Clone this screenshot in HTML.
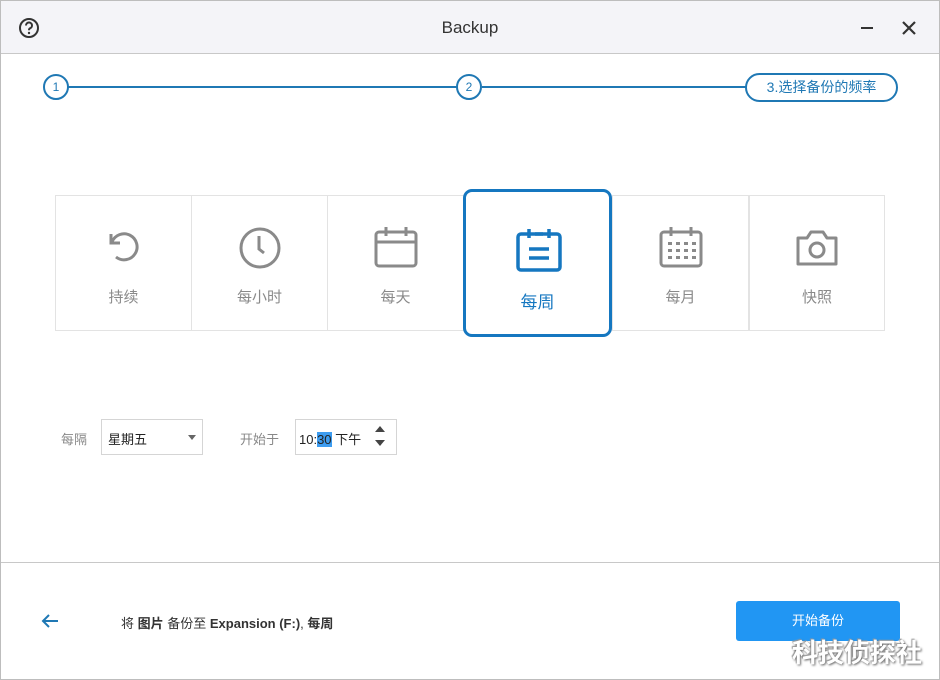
<!DOCTYPE html><html><head><meta charset="utf-8"><style>
*{margin:0;padding:0;box-sizing:border-box}
body{width:940px;height:680px;background:#fff;font-family:"Liberation Sans","Noto Sans CJK SC",sans-serif;position:relative;overflow:hidden}
.a{position:absolute}
.win{left:0;top:0;width:940px;height:680px;border:1px solid #bdbdbd}
.title{left:1px;top:1px;width:938px;height:53px;background:#f4f4f8;border-bottom:1px solid #c8c8c8}
.tile{top:195px;height:136px;width:137px;border:1px solid #e3e3e3;text-align:center;color:#8a8a8a;font-size:15px}
.tile svg{position:absolute;left:50%;top:28px;margin-left:-24px}
.tile span{position:absolute;left:0;right:0;top:90px}
.circ{width:26px;height:26px;border:2px solid #1f78b4;border-radius:50%;color:#1f78b4;font-size:12px;text-align:center;line-height:22px;background:#fff}
.line{height:2px;background:#1f78b4;top:86px}
</style></head><body>
<div class="a win"></div>
<div class="a title"></div>
<svg class="a" style="left:18px;top:17px" width="22" height="22" viewBox="0 0 22 22"><circle cx="11" cy="11" r="9" fill="none" stroke="#333" stroke-width="2"/><path d="M8 8.5a3 3 0 1 1 4 2.8c-.8.4-1 1-1 2" fill="none" stroke="#333" stroke-width="2"/><circle cx="11" cy="16" r="1.2" fill="#333"/></svg>
<div class="a" style="left:0;width:940px;top:18px;text-align:center;font-size:17px;color:#333">Backup</div>
<div class="a" style="left:861px;top:27px;width:12px;height:2px;background:#333"></div>
<svg class="a" style="left:901px;top:20px" width="16" height="16"><path d="M2 2L14 14M14 2L2 14" stroke="#333" stroke-width="2.2"/></svg>
<div class="a line" style="left:68px;width:390px"></div>
<div class="a line" style="left:482px;width:265px"></div>
<div class="a circ" style="left:43px;top:74px">1</div>
<div class="a circ" style="left:456px;top:74px">2</div>
<div class="a" style="left:745px;top:73px;width:153px;height:29px;border:2px solid #1f78b4;border-radius:15px;color:#1f78b4;font-size:14px;text-align:center;line-height:25px;background:#fff">3.选择备份的频率</div>

<div class="a tile" style="left:55px"><svg width="48" height="48" viewBox="0 0 48 48"><path d="M11 10v9h9" fill="none" stroke="#8a8a8a" stroke-width="3"/><path d="M12 18A13 13 0 1 1 16 33" fill="none" stroke="#8a8a8a" stroke-width="3"/></svg><span>持续</span></div>
<div class="a tile" style="left:191px"><svg width="48" height="48" viewBox="0 0 48 48"><circle cx="24" cy="24" r="19" fill="none" stroke="#8a8a8a" stroke-width="3"/><path d="M23 12v13l5 4" fill="none" stroke="#8a8a8a" stroke-width="3"/></svg><span>每小时</span></div>
<div class="a tile" style="left:327px"><svg width="48" height="48" viewBox="0 0 48 48"><rect x="4" y="8" width="40" height="34" rx="3" fill="none" stroke="#8a8a8a" stroke-width="3"/><path d="M4 18h40" stroke="#8a8a8a" stroke-width="3"/><path d="M14 3v9M34 3v9M20 8h8" stroke="#8a8a8a" stroke-width="3"/></svg><span>每天</span></div>
<div class="a tile" style="left:612px"><svg width="48" height="48" viewBox="0 0 48 48"><rect x="4" y="8" width="40" height="34" rx="3" fill="none" stroke="#8a8a8a" stroke-width="3"/><path d="M14 3v9M34 3v9M20 8h8" stroke="#8a8a8a" stroke-width="3"/><g fill="#8a8a8a"><rect x="11" y="18" width="4" height="3"/><rect x="19" y="18" width="4" height="3"/><rect x="27" y="18" width="4" height="3"/><rect x="35" y="18" width="4" height="3"/><rect x="11" y="25" width="4" height="3"/><rect x="19" y="25" width="4" height="3"/><rect x="27" y="25" width="4" height="3"/><rect x="35" y="25" width="4" height="3"/><rect x="11" y="32" width="4" height="3"/><rect x="19" y="32" width="4" height="3"/><rect x="27" y="32" width="4" height="3"/><rect x="35" y="32" width="4" height="3"/></g></svg><span>每月</span></div>
<div class="a tile" style="left:749px;width:136px"><svg width="48" height="48" viewBox="0 0 48 48"><path d="M5 14h9l4-6h12l4 6h9v26H5z" fill="none" stroke="#8a8a8a" stroke-width="3" stroke-linejoin="round"/><circle cx="24" cy="26" r="7" fill="none" stroke="#8a8a8a" stroke-width="3"/></svg><span>快照</span></div>
<div class="a" style="left:463px;top:189px;width:149px;height:148px;border:3px solid #1577c0;border-radius:9px;background:#fff;text-align:center;color:#1577c0;font-size:17px">
<svg style="position:absolute;left:49px;top:34px" width="48" height="48" viewBox="0 0 48 48"><rect x="3" y="8" width="42" height="36" rx="3" fill="none" stroke="#1577c0" stroke-width="3.5"/><path d="M14 3v9M34 3v9M20 8h8M14 23h20M14 32h20" stroke="#1577c0" stroke-width="3.5"/></svg>
<span style="position:absolute;left:0;right:0;top:96px">每周</span></div>

<div class="a" style="left:61px;top:429px;font-size:13px;color:#888">每隔</div>
<div class="a" style="left:101px;top:419px;width:102px;height:36px;border:1px solid #d5d5d5;font-size:13px;color:#222;padding:9px 0 0 6px">星期五</div>
<div class="a" style="left:188px;top:435px;border:4px solid transparent;border-top:5px solid #666"></div>
<div class="a" style="left:240px;top:429px;font-size:13px;color:#888">开始于</div>
<div class="a" style="left:295px;top:419px;width:102px;height:36px;border:1px solid #d5d5d5;font-size:13px;color:#222;padding:9px 0 0 3px">10:<span style="background:#3d9cf0;color:#222">30</span> 下午</div>
<div class="a" style="left:375px;top:426px;border:5px solid transparent;border-bottom:6px solid #444;border-top:0"></div>
<div class="a" style="left:375px;top:440px;border:5px solid transparent;border-top:6px solid #444;border-bottom:0"></div>

<div class="a" style="left:1px;top:562px;width:938px;height:1px;background:#c8c8c8"></div>
<svg class="a" style="left:40px;top:613px" width="20" height="16"><path d="M18 8H3M9 2L3 8l6 6" fill="none" stroke="#1f78b4" stroke-width="2"/></svg>
<div class="a" style="left:121px;top:613px;font-size:13px;color:#333">将 <b>图片</b> 备份至 <b>Expansion (F:)</b>, <b>每周</b></div>
<div class="a" style="left:736px;top:601px;width:164px;height:40px;background:#2196f3;border-radius:3px;color:#fff;font-size:13px;text-align:center;line-height:40px">开始备份</div>
<div class="a" style="left:792px;top:633px;font-size:26px;color:#fff;font-weight:bold;text-shadow:1px 1px 2px #666,-1px -1px 1px #999">科技侦探社</div>
</body></html>
